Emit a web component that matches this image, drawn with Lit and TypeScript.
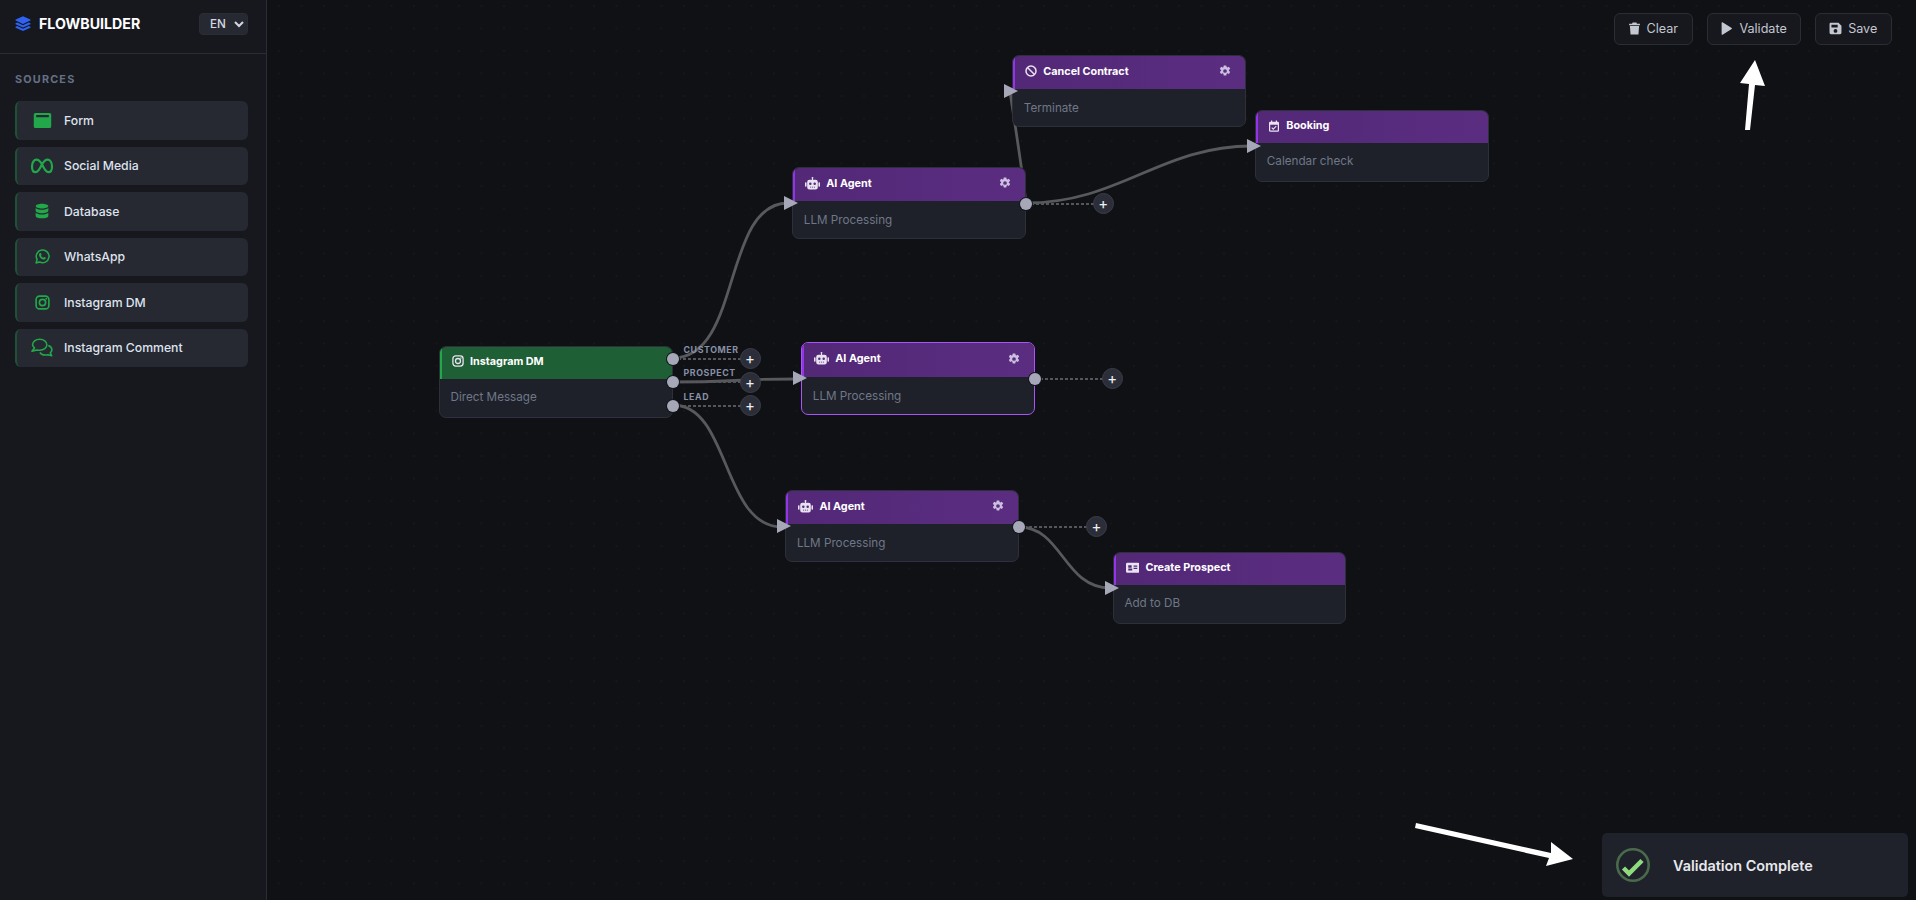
import { LitElement, html, css, svg } from 'lit';
import { customElement, property } from 'lit/decorators.js';

const ICONS: Record<string, unknown> = {
  form: svg`<path fill="currentColor" fill-rule="evenodd" d="M3 2.500h18a2 2 0 0 1 2 2v15a2 2 0 0 1-2 2H3a2 2 0 0 1-2-2v-15a2 2 0 0 1 2-2zM4 5v3h16V5z"/>`,
  meta: svg`<path fill="none" stroke="currentColor" stroke-width="2.200" stroke-linejoin="round" d="M12 10.200C14 7 15.600 5.600 17.400 5.600c2.700 0 4.600 3 4.600 6.800 0 3.300-1.400 5.700-3.600 5.700-2.200 0-3.700-1.800-6.400-7.900zm0 0C10 7 8.400 5.600 6.600 5.600 3.900 5.600 2 8.600 2 12.400c0 3.300 1.400 5.700 3.600 5.700 2.200 0 3.700-1.800 6.400-7.900z"/>`,
  db: svg`<g fill="currentColor"><path d="M12 1c5 0 9.500 1.500 9.500 3.600S17 8.300 12 8.300 2.500 6.700 2.500 4.600 7 1 12 1z"/><path d="M2.500 7.400C4 9.300 8 10 12 10s8-.7 9.500-2.600v4.200c0 2.100-4.500 3.700-9.500 3.700s-9.500-1.600-9.500-3.700z"/><path d="M2.500 14.600c1.500 1.900 5.500 2.600 9.500 2.600s8-.7 9.500-2.600v4.800C21.500 21.500 17 23 12 23s-9.500-1.500-9.500-3.600z"/></g>`,
  whatsapp: svg`<path fill="none" stroke="currentColor" stroke-width="2.500" stroke-linejoin="round" d="M1.800 22.200l1.500-5.500A10.200 10.200 0 1 1 7.300 20.700z"/><path fill="currentColor" d="M8.700 6.500c.6 0 .8.100 1 .6l.8 1.900c.1.300 0 .6-.2.800l-.7.900c.8 1.500 2 2.600 3.600 3.300l.9-1c.2-.3.500-.3.800-.2l1.900.9c.4.200.5.400.4.800-.2 1.500-1.400 2.400-2.900 2.400-3.600-.2-7.500-3.900-7.900-7.500C6.300 8 7.300 6.500 8.700 6.500z"/>`,
  instagram: svg`<g fill="none" stroke="currentColor" stroke-width="2.600"><rect x="1.800" y="1.800" width="20.400" height="20.400" rx="5.500"/><circle cx="12" cy="12" r="5"/></g><circle cx="18" cy="6" r="1.500" fill="currentColor"/>`,
  comments: svg`<g fill="none" stroke="currentColor" stroke-width="1.700" stroke-linejoin="round"><path d="M9.500 2.500c4.400 0 7.800 2.600 7.800 6s-3.400 6-7.800 6c-1 0-2-.1-2.900-.4L1 15.400l2.800-3.500C2.500 10.800 1.700 9.700 1.700 8.500c0-3.400 3.400-6 7.800-6z"/><path d="M18.900 9.300c2.200.8 3.900 2.600 3.900 4.700 0 1.300-.7 2.500-1.800 3.400l1.600 3.100-4.100-1.200c-.9.300-1.800.4-2.800.4-2.600 0-4.900-1.100-6-2.800"/></g>`,
  robot: svg`<path fill="currentColor" fill-rule="evenodd" d="M12 1.500a1.500 1.500 0 0 1 .8 2.800V6h4.200a3.500 3.500 0 0 1 3.500 3.500V18a3.500 3.500 0 0 1-3.500 3.500H7A3.500 3.500 0 0 1 3.500 18V9.500A3.500 3.500 0 0 1 7 6h4.200V4.300A1.500 1.500 0 0 1 12 1.500zM8.500 10.500a2 2 0 1 0 0 4 2 2 0 0 0 0-4zm7 0a2 2 0 1 0 0 4 2 2 0 0 0 0-4zM8 17v1.500h1.800V17zm3.100 0v1.500h1.800V17zm3.100 0v1.500H16V17z"/><rect x="0" y="10" width="2.500" height="7" rx="1" fill="currentColor"/><rect x="21.500" y="10" width="2.500" height="7" rx="1" fill="currentColor"/>`,
  gear: svg`<path fill="currentColor" fill-rule="evenodd" d="M9.500 .8h5l.8 3.300 1.500.8 3-1.500 2.600 4.300-2.600 2.200v1.800l2.600 2.200-2.600 4.300-3-1.500-1.500.8-.8 3.300h-5l-.8-3.300-1.500-.8-3 1.500-2.600-4.300 2.600-2.200v-1.800L1.600 8l2.600-4.300 3 1.500 1.500-.8zM12 8.300a3.700 3.700 0 1 0 0 7.400 3.700 3.700 0 0 0 0-7.400z"/>`,
  ban: svg`<g fill="none" stroke="currentColor" stroke-width="3"><circle cx="12" cy="12" r="10"/><path d="M5 5l14 14"/></g>`,
  calendar: svg`<path fill="currentColor" fill-rule="evenodd" d="M6 1h2.500v2.500h7V1H18v2.500h1.500a2.500 2.500 0 0 1 2.500 2.500v15a2.500 2.500 0 0 1-2.500 2.500h-15A2.500 2.500 0 0 1 2 21V6a2.500 2.500 0 0 1 2.500-2.500H6zM4.500 9.500V21h15V9.500z"/><path fill="none" stroke="currentColor" stroke-width="2.300" d="M7.500 15.200l3 3 6-6"/>`,
  card: svg`<path fill="currentColor" fill-rule="evenodd" d="M2.500 3h19A2.500 2.500 0 0 1 24 5.500v13a2.500 2.500 0 0 1-2.500 2.500h-19A2.500 2.500 0 0 1 0 18.500v-13A2.500 2.500 0 0 1 2.500 3zM4 7.500V12h6V7.500zm0 6V17h7v-3.500zM13.500 8v2H20V8zm0 4v2H20v-2z"/>`,
  trash: svg`<path fill="currentColor" d="M8.500 1h7l1 2H22v3H2V3h5.500zM3.500 7.500h17L19.300 23H4.700z"/>`,
  play: svg`<path fill="currentColor" d="M3 1.500v21c0 .8.900 1.300 1.600.9l17-10.500c.6-.4.600-1.400 0-1.800L4.600.6C3.900.2 3 .7 3 1.500z"/>`,
  save: svg`<path fill="currentColor" fill-rule="evenodd" d="M4 1.500h13.500L23 7v13a2.500 2.500 0 0 1-2.500 2.500h-17A2.500 2.500 0 0 1 1 20V4a2.500 2.500 0 0 1 3-2.500zM4.500 5v5H16V5zM12 13a3.500 3.500 0 1 0 0 7 3.500 3.500 0 0 0 0-7z"/>`,
  layers: svg`<g fill="currentColor"><path d="M12 .5l11 4.900c.6.300.6 1.200 0 1.500L12 12 1 6.900c-.6-.3-.6-1.200 0-1.500z"/><path d="M3.300 9.700l8.700 4 8.700-4 2.300 1c.6.300.6 1.200 0 1.500L12 17.300 1 12.200c-.6-.3-.6-1.200 0-1.500z"/><path d="M3.300 15l8.700 4 8.700-4 2.300 1c.6.300.6 1.200 0 1.500L12 22.600 1 17.500c-.6-.3-.6-1.200 0-1.500z"/></g>`,
};

const icon = (name: string) => html`<svg class="i-${name}" viewBox="0 0 24 24">${ICONS[name]}</svg>`;

const SOURCES = [
  { icon: 'form', label: 'Form' },
  { icon: 'meta', label: 'Social Media' },
  { icon: 'db', label: 'Database' },
  { icon: 'whatsapp', label: 'WhatsApp' },
  { icon: 'instagram', label: 'Instagram DM' },
  { icon: 'comments', label: 'Instagram Comment' },
];

interface Port { y: number; label?: string }
interface FlowNodeData {
  x: number; y: number; title: string; body: string; icon: string;
  kind: 'source' | 'action'; gear?: boolean; selected?: boolean; target?: boolean; ports: Port[];
}

const AGENT_PORT = [{ y: 35.500 }];

// positions are page pixels, the canvas starts after the 267px sidebar
const NODES: FlowNodeData[] = [
  { x: 439, y: 346, title: 'Instagram DM', body: 'Direct Message', icon: 'instagram', kind: 'source',
    ports: [{ y: 11.700, label: 'CUSTOMER' }, { y: 35, label: 'PROSPECT' }, { y: 58.800, label: 'LEAD' }] },
  { x: 792.300, y: 167.300, title: 'AI Agent', body: 'LLM Processing', icon: 'robot', kind: 'action', gear: true, target: true, ports: AGENT_PORT },
  { x: 801.300, y: 342.300, title: 'AI Agent', body: 'LLM Processing', icon: 'robot', kind: 'action', gear: true, target: true, selected: true, ports: AGENT_PORT },
  { x: 785.400, y: 490.300, title: 'AI Agent', body: 'LLM Processing', icon: 'robot', kind: 'action', gear: true, target: true, ports: AGENT_PORT },
  { x: 1012.300, y: 55.300, title: 'Cancel Contract', body: 'Terminate', icon: 'ban', kind: 'action', gear: true, target: true, ports: [] },
  { x: 1255.300, y: 110.300, title: 'Booking', body: 'Calendar check', icon: 'calendar', kind: 'action', target: true, ports: [] },
  { x: 1112.900, y: 552.300, title: 'Create Prospect', body: 'Add to DB', icon: 'card', kind: 'action', target: true, ports: [] },
];

const EDGES = [
  'M673 358C742 358 722 203 788 203',
  'M673 382C735 382 735 379 796 379',
  'M673 405C730 405 722 527 782 527',
  'M1026 203C1120 203 1160 146 1252 146',
  'M1026 203C1022 170 1016 130 1010 92',
  'M1019 527C1062 527 1064 588 1110 588',
];

@customElement('flow-node')
export class FlowNode extends LitElement {
  static styles = css`
    :host {
      position: absolute;
      display: block;
      width: 233.500px;
      height: 72px;
    }
    .card {
      height: 100%;
      box-sizing: border-box;
      display: flex;
      flex-direction: column;
      border: 1px solid #2d303a;
      border-radius: 7px;
      background: #1e2129;
      overflow: hidden;
    }
    .card.selected {
      height: 72.600px;
      border-color: #a855f7;
    }
    .head {
      height: 33px;
      flex: none;
      box-sizing: border-box;
      display: flex;
      align-items: center;
      gap: 6px;
      padding: 0 14px 3px 10px;
      border-left: 2px solid #9333ea;
      background: linear-gradient(90deg, #522877, #5b2d81);
      color: #fff;
      font-size: 10.800px;
      font-weight: 700;
    }
    .selected .head {
      height: 34px;
    }
    .plain .head {
      height: 31.500px;
      padding-bottom: 2.500px;
    }
    .source .head {
      height: 31.500px;
      padding-bottom: 3px;
      border-left-color: #22a84a;
      background: #1f5f35;
    }
    .head svg {
      width: 12px;
      height: 12px;
      flex: none;
      color: #e9e2f0;
    }
    .head svg.i-robot {
      width: 15px;
      height: 15px;
    }
    .head svg.i-card {
      width: 13.500px;
      height: 13.500px;
    }
    .head .gear {
      margin-left: auto;
      color: #cdbfe0;
      display: flex;
    }
    .head .gear svg {
      color: inherit;
    }
    .body {
      padding: 10.500px 10.500px;
      color: #6f7788;
      font-size: 11.700px;
      line-height: 16px;
    }
    .arrow {
      position: absolute;
      left: -8px;
      top: 29px;
      width: 14px;
      height: 14px;
      fill: #a6a8b8;
    }
    .port {
      position: absolute;
      left: 100%;
      width: 77.500px;
      height: 2px;
      background: repeating-linear-gradient(90deg, #55565c 0 3px, transparent 3px 5px);
    }
    .dot {
      position: absolute;
      left: -6px;
      top: -5px;
      width: 12px;
      height: 12px;
      border-radius: 50%;
      background: #a6a8b8;
      box-shadow: 0 0 0 1px #14161b;
    }
    .plus {
      position: absolute;
      right: -10.500px;
      top: -9.500px;
      width: 21px;
      height: 21px;
      border-radius: 50%;
      background: #2b2e38;
      border: 1px solid #3b3e48;
      box-sizing: border-box;
      display: flex;
      align-items: center;
      justify-content: center;
      color: #eef0f5;
      font-size: 15px;
      line-height: 1;
    }
    .tag {
      position: absolute;
      left: 11px;
      top: -14px;
      color: #8790a6;
      font-size: 8.800px;
      font-weight: 700;
      letter-spacing: 0.600px;
      line-height: 11px;
    }
  `;

  @property({ attribute: false }) data!: FlowNodeData;

  render() {
    const d = this.data;
    return html`
      <div class="card ${d.kind} ${d.gear ? '' : 'plain'} ${d.selected ? 'selected' : ''}">
        <div class="head">
          ${icon(d.icon)}<span>${d.title}</span>
          ${d.gear ? html`<span class="gear">${icon('gear')}</span>` : ''}
        </div>
        <div class="body">${d.body}</div>
      </div>
      ${d.target ? html`<svg class="arrow" viewBox="0 0 13 13"><path d="M0 0L13 6.500L0 13z"/></svg>` : ''}
      ${d.ports.map((p) => html`
        <div class="port" style="top:${p.y}px">
          <div class="dot"></div>
          ${p.label ? html`<span class="tag">${p.label}</span>` : ''}
          <div class="plus">+</div>
        </div>
      `)}
    `;
  }
}

@customElement('app-root')
export class AppRoot extends LitElement {
  static styles = css`
    :host {
      display: flex;
      width: 100%;
      height: 900px;
      overflow: hidden;
      font-family: Inter, 'Liberation Sans', sans-serif;
      background: #0f1116;
    }
    .sidebar {
      width: 267px;
      flex: none;
      box-sizing: border-box;
      background: #16181e;
      border-right: 1px solid #2a2d35;
    }
    .brand {
      height: 54px;
      box-sizing: border-box;
      display: flex;
      align-items: center;
      gap: 8px;
      padding: 0 18px 5px 15px;
      border-bottom: 1px solid #2a2d35;
      color: #fff;
      font-size: 14.200px;
      font-weight: 700;
    }
    .brand span {
      margin-bottom: 1px;
    }
    .brand svg {
      width: 16px;
      height: 16px;
      margin-bottom: 1px;
      color: #2f62f2;
    }
    .brand select {
      margin-left: auto;
      width: 49px;
      height: 22px;
      color-scheme: dark;
      background: #262932;
      color: #d5d8e0;
      border: 1px solid #2a2d35;
      border-radius: 4px;
      font: 500 11.700px Inter, sans-serif;
      padding-left: 6px;
    }
    .section {
      padding: 19px 18px 0 15px;
    }
    .section h2 {
      margin: 0 0 14.200px;
      color: #667085;
      font-size: 10.800px;
      font-weight: 700;
      letter-spacing: 1.200px;
      line-height: 14px;
    }
    .items {
      display: flex;
      flex-direction: column;
      gap: 7.100px;
    }
    .item {
      height: 38.400px;
      box-sizing: border-box;
      display: flex;
      align-items: center;
      border-left: 2px solid #1f5135;
      border-radius: 6px;
      background: #262932;
      color: #dfe3ee;
      font-size: 12.240px;
      font-weight: 500;
    }
    .item .slot {
      width: 20px;
      display: flex;
      justify-content: center;
      margin: 0 12px 0 15px;
      color: #22a84a;
    }
    .item svg {
      width: 16px;
      height: 16px;
      flex: none;
    }
    .item svg.i-form {
      width: 19px;
      height: 19px;
    }
    .item svg.i-meta {
      width: 24px;
      height: 24px;
    }
    .item svg.i-comments {
      width: 22px;
      height: 22px;
    }
    .item svg.i-whatsapp,
    .item svg.i-instagram {
      width: 15px;
      height: 15px;
    }
    .canvas {
      flex: 1;
      position: relative;
      background-color: #0f1115;
      background-image: radial-gradient(circle at 1px 1px, #15171b 1px, transparent 1.200px);
      background-size: 22.500px 22.500px;
      background-position: 11px 5px;
    }
    .layer {
      position: absolute;
      inset: 0;
      width: 100%;
      height: 100%;
      pointer-events: none;
    }
    .edges path {
      fill: none;
      stroke: #58595c;
      stroke-width: 2.800px;
    }
    .toolbar {
      position: absolute;
      top: 13px;
      right: 24px;
      display: flex;
      gap: 14px;
    }
    .toolbar button {
      height: 32px;
      box-sizing: border-box;
      display: flex;
      align-items: center;
      gap: 6px;
      padding: 0 13.700px 1px;
      background: #16181e;
      border: 1px solid #2a2d35;
      border-radius: 6px;
      color: #c3c7d0;
      font: 400 12.600px Inter, sans-serif;
    }
    .toolbar svg {
      width: 13px;
      height: 13px;
      margin-left: -1px;
    }
    .toast {
      position: absolute;
      right: 8px;
      bottom: 3px;
      width: 306px;
      height: 64px;
      box-sizing: border-box;
      display: flex;
      align-items: center;
      gap: 22px;
      padding-left: 13px;
      border-radius: 5px;
      background: #1f222b;
      color: #e8e8ec;
      font-size: 14.400px;
      font-weight: 600;
    }
    .toast svg {
      width: 36px;
      height: 36px;
    }
  `;

  render() {
    return html`
      <aside class="sidebar">
        <div class="brand">
          ${icon('layers')}<span>FLOWBUILDER</span>
          <select><option>EN</option></select>
        </div>
        <div class="section">
          <h2>SOURCES</h2>
          <div class="items">
            ${SOURCES.map((s) => html`<div class="item"><span class="slot">${icon(s.icon)}</span><span>${s.label}</span></div>`)}
          </div>
        </div>
      </aside>
      <main class="canvas">
        <svg class="layer edges" viewBox="267 0 1649 900">
          ${EDGES.map((d) => svg`<path d=${d}></path>`)}
        </svg>
        ${NODES.map((n) => html`<flow-node .data=${n} style="left:${n.x - 267}px;top:${n.y}px"></flow-node>`)}
        <div class="toolbar">
          <button>${icon('trash')}Clear</button>
          <button>${icon('play')}Validate</button>
          <button>${icon('save')}Save</button>
        </div>
        <div class="toast">
          <svg viewBox="0 0 36 36">
            <circle cx="18" cy="18" r="15.700" fill="none" stroke="#4a6a4c" stroke-width="2.600"></circle>
            <path d="M8.500 21l5.500 5.500L27 13.500" fill="none" stroke="#8fdc7f" stroke-width="4.500"></path>
          </svg>
          <span>Validation Complete</span>
        </div>
        <svg class="layer" viewBox="267 0 1649 900">
          <path fill="#fff" d="M1745 130L1749 84L1740 83L1755 60L1765 86L1755 85L1750 130z"></path>
          <path fill="#fff" d="M1416 823L1551 853L1551 842L1573 859L1546 866L1549 858L1415 828z"></path>
        </svg>
      </main>
    `;
  }
}
